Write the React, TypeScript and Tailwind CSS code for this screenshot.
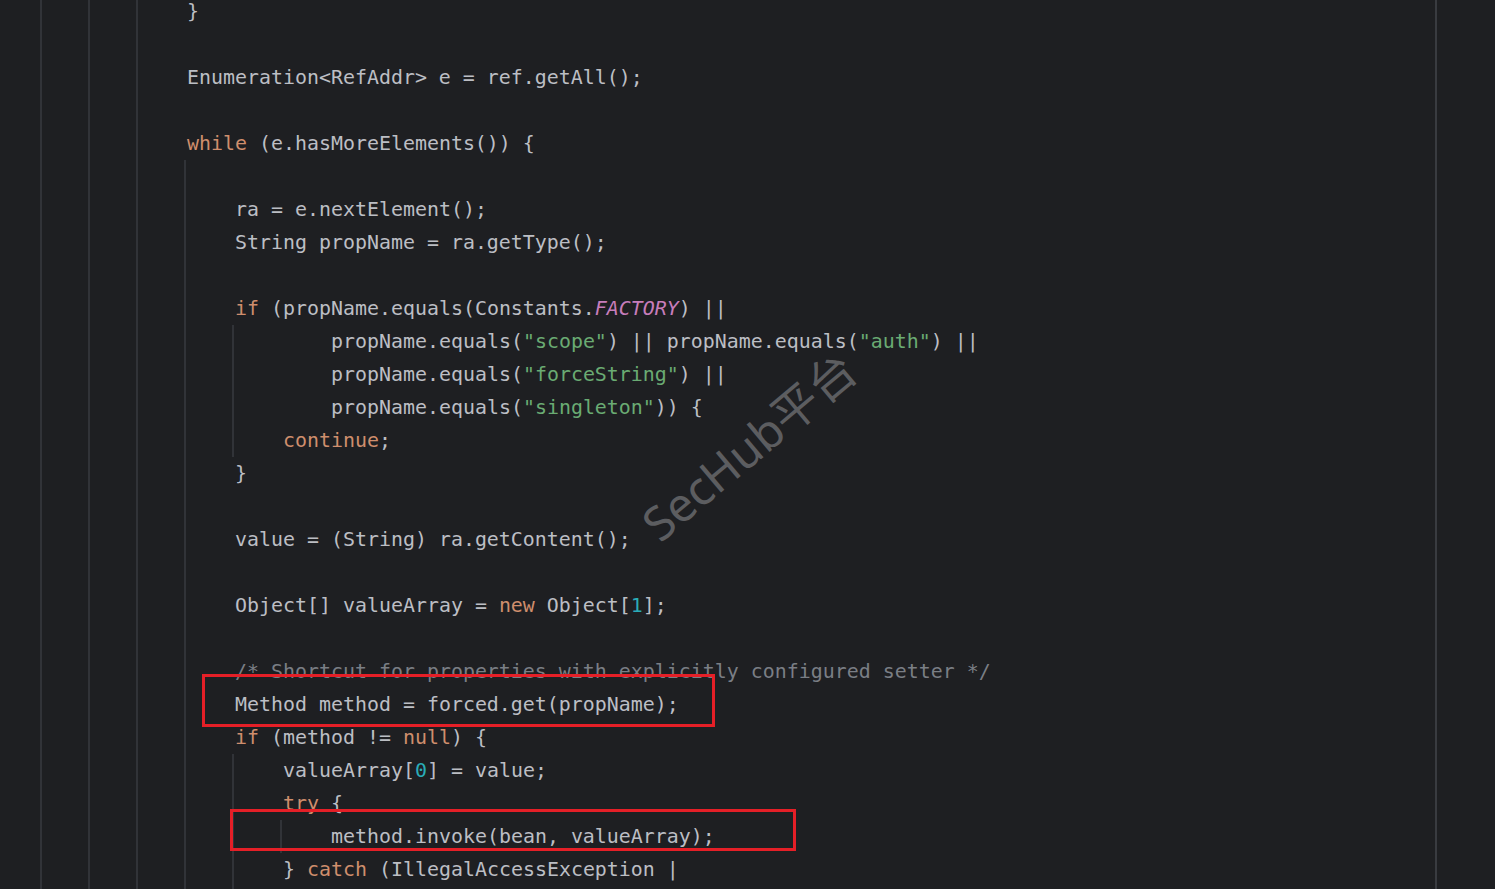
type Seg = [string, string?];

interface CodeLine {
    cells: number;
    guides: number[];
    segs: Seg[];
}

const G3 = [0, 1, 2];
const G4 = [0, 1, 2, 3];
const G5 = [0, 1, 2, 3, 4];

const lines: CodeLine[] = [
    { cells: 3, guides: G3, segs: [["}"]] },
    { cells: 3, guides: G3, segs: [] },
    { cells: 3, guides: G3, segs: [["Enumeration<RefAddr> e = ref.getAll();"]] },
    { cells: 3, guides: G3, segs: [] },
    { cells: 3, guides: G3, segs: [["while", "k"], [" (e.hasMoreElements()) {"]] },
    { cells: 4, guides: G4, segs: [] },
    { cells: 4, guides: G4, segs: [["ra = e.nextElement();"]] },
    { cells: 4, guides: G4, segs: [["String propName = ra.getType();"]] },
    { cells: 4, guides: G4, segs: [] },
    { cells: 4, guides: G4, segs: [["if", "k"], [" (propName.equals(Constants."], ["FACTORY", "c"], [") ||"]] },
    { cells: 6, guides: G5, segs: [["propName.equals("], ['"scope"', "s"], [") || propName.equals("], ['"auth"', "s"], [") ||"]] },
    { cells: 6, guides: G5, segs: [["propName.equals("], ['"forceString"', "s"], [") ||"]] },
    { cells: 6, guides: G5, segs: [["propName.equals("], ['"singleton"', "s"], [")) {"]] },
    { cells: 5, guides: G5, segs: [["continue", "k"], [";"]] },
    { cells: 4, guides: G4, segs: [["}"]] },
    { cells: 4, guides: G4, segs: [] },
    { cells: 4, guides: G4, segs: [["value = (String) ra.getContent();"]] },
    { cells: 4, guides: G4, segs: [] },
    { cells: 4, guides: G4, segs: [["Object[] valueArray = "], ["new", "k"], [" Object["], ["1", "n"], ["];"]] },
    { cells: 4, guides: G4, segs: [] },
    { cells: 4, guides: G4, segs: [["/* Shortcut for properties with explicitly configured setter */", "m"]] },
    { cells: 4, guides: G4, segs: [["Method method = forced.get(propName);"]] },
    { cells: 4, guides: G4, segs: [["if", "k"], [" (method != "], ["null", "k"], [") {"]] },
    { cells: 5, guides: G5, segs: [["valueArray["], ["0", "n"], ["] = value;"]] },
    { cells: 5, guides: G5, segs: [["try", "k"], [" {"]] },
    { cells: 6, guides: [0, 1, 2, 3, 4, 5], segs: [["method.invoke(bean, valueArray);"]] },
    { cells: 5, guides: G5, segs: [["} "], ["catch", "k"], [" (IllegalAccessException |"]] },
    { cells: 5, guides: G5, segs: [] },
];

const segClass = (kind?: string) => {
    if (kind === "k") return "text-[#cf8e6d]";
    if (kind === "s") return "text-[#6aab73]";
    if (kind === "n") return "text-[#2aacb8]";
    if (kind === "c") return "text-[#c77dbb] italic";
    if (kind === "m") return "text-[#7a7e85]";
    return "text-[#bcbec4]";
};

const App = () => {
    return (
        <div className="flex h-[889px] w-full overflow-hidden bg-[#1e1f22] font-['DejaVu_Sans_Mono',monospace] text-[19.93px]">
            {/* Editor area */}
            <div className="relative w-[1435px] shrink-0 overflow-hidden">
                <div className="-mt-[5px] flex flex-col">
                    {lines.map((line, idx) => (
                        <div key={idx} className="flex h-[33px] items-center">
                            <div className="h-full w-[40px] shrink-0" />
                            {Array.from({ length: line.cells }).map((_, i) => (
                                <div
                                    key={i}
                                    className={`h-full w-[48px] shrink-0 ${line.guides.includes(i) ? "border-l-2 border-[#313338]" : ""}`}
                                />
                            ))}
                            <div className="whitespace-pre pl-[3px] leading-[33px]">
                                {line.segs.map((s, i) => (
                                    <span key={i} className={segClass(s[1])}>{s[0]}</span>
                                ))}
                            </div>
                        </div>
                    ))}
                </div>

                {/* Watermark */}
                <span className="pointer-events-none absolute left-[749px] top-[446px] -translate-x-1/2 -translate-y-1/2 rotate-[-40deg] whitespace-nowrap font-['Noto_Sans','Noto_Sans_CJK_SC',sans-serif] text-[47px] text-[#5c5d60]">
                    SecHub平台
                </span>

                {/* Highlight boxes */}
                <div className="absolute left-[202px] top-[674px] h-[53px] w-[513px] border-[3px] border-[#e51f27]" />
                <div className="absolute left-[230px] top-[809px] h-[42px] w-[566px] border-[3px] border-[#e51f27]" />
            </div>
            {/* Right margin */}
            <div className="w-[2px] shrink-0 bg-[#393b40]" />
            <div className="flex-1" />
        </div>
    );
};

export default App;
